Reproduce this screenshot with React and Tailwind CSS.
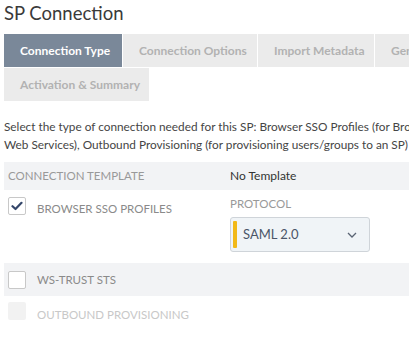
import React from 'react';

const tabs = [
  { label: 'Connection Type', active: true, w: 'w-[118px]' },
  { label: 'Connection Options', w: 'w-[134px]' },
  { label: 'Import Metadata', w: 'w-[116px]' },
  { label: 'General Info', w: 'w-[110px]' },
];

const Check = () => (
  <svg width="12" height="10" viewBox="0 0 12 10">
    <path d="M1.5 5.2 L4.5 8 L10.5 1.8" fill="none" stroke="#34466a" strokeWidth="2.2" strokeLinecap="round" strokeLinejoin="round" />
  </svg>
);

const App = () => {
  return (
    <div className="w-[409px] h-[346px] overflow-hidden bg-white" style={{ fontFamily: 'Lato, "Open Sans", sans-serif' }}>
      <div className="w-[700px] pl-1">
        <h1 className="text-[18.5px] leading-[24px] text-[#3a3a3a] pt-px">SP Connection</h1>

        <div className="mt-[9px] flex flex-col gap-px">
          <div className="flex gap-px">
            {tabs.map((t) => (
              <div
                key={t.label}
                className={
                  (t.active ? 'bg-[#7a8899] text-white ' : 'bg-[#ebebeb] text-[#b2b2b2] ') +
                  t.w +
                  ' h-[33px] flex items-center pl-4 text-[12px] font-bold whitespace-nowrap'
                }
              >
                {t.label}
              </div>
            ))}
          </div>
          <div className="flex">
            <div className="bg-[#ebebeb] text-[#b2b2b2] w-[145px] h-[33px] flex items-center pl-4 text-[12px] font-bold whitespace-nowrap">
              Activation &amp; Summary
            </div>
          </div>
        </div>

        <p className="mt-[17px] text-[11.8px] leading-[18px] text-[#454545] whitespace-nowrap">
          Select the type of connection needed for this SP: Browser SSO Profiles (for Browser SSO), WS-Trust STS (for access to identity-enabled
          <br />
          Web Services), Outbound Provisioning (for provisioning users/groups to an SP) or all of them.
        </p>

        <div className="mt-[8px] text-[11.5px]">
          <div className="grid grid-cols-[226px_1fr] h-[28px] items-center bg-[#f2f3f5]">
            <div className="pl-1 text-[#999]">CONNECTION TEMPLATE</div>
            <div className="text-[#333] text-[12px]">No Template</div>
          </div>

          <div className="grid grid-cols-[226px_1fr] pt-[7px] pb-[11px]">
            <div className="flex items-center gap-[11px] pl-1 h-[18px]">
              <div className="w-[18px] h-[18px] border border-[#c8c8c8] rounded-[2px] bg-white flex items-center justify-center">
                <Check />
              </div>
              <span className="text-[#8a8a8a] mt-[6px]">BROWSER SSO PROFILES</span>
            </div>
            <div>
              <div className="text-[#999] leading-[14px]">PROTOCOL</div>
              <div className="mt-[6px] w-[140px] h-[35px] border border-[#cfd4d9] rounded-[3px] bg-[#f0f4f7] flex items-center pl-[2px] pr-[12px]">
                <div className="w-[4px] h-[27px] bg-[#f2b918] rounded-[1px]" />
                <span className="ml-[6px] text-[13px] text-[#4a5568] flex-1">SAML 2.0</span>
                <svg width="10" height="6" viewBox="0 0 10 6">
                  <path d="M1 1 L5 5 L9 1" fill="none" stroke="#5a6474" strokeWidth="1.3" />
                </svg>
              </div>
            </div>
          </div>

          <div className="h-[33px] flex items-center gap-[11px] pl-1 bg-[#f2f3f5]">
            <div className="w-[18px] h-[18px] border border-[#c8c8c8] rounded-[2px] bg-white" />
            <span className="text-[#8a8a8a]">WS-TRUST STS</span>
          </div>

          <div className="h-[33px] flex items-center gap-[11px] pl-1">
            <div className="w-[18px] h-[18px] rounded-[2px] bg-[#f2f2f2] -mt-[4px]" />
            <span className="text-[#c8c8c8] mt-[4px]">OUTBOUND PROVISIONING</span>
          </div>
        </div>
      </div>
    </div>
  );
};

export default App;
